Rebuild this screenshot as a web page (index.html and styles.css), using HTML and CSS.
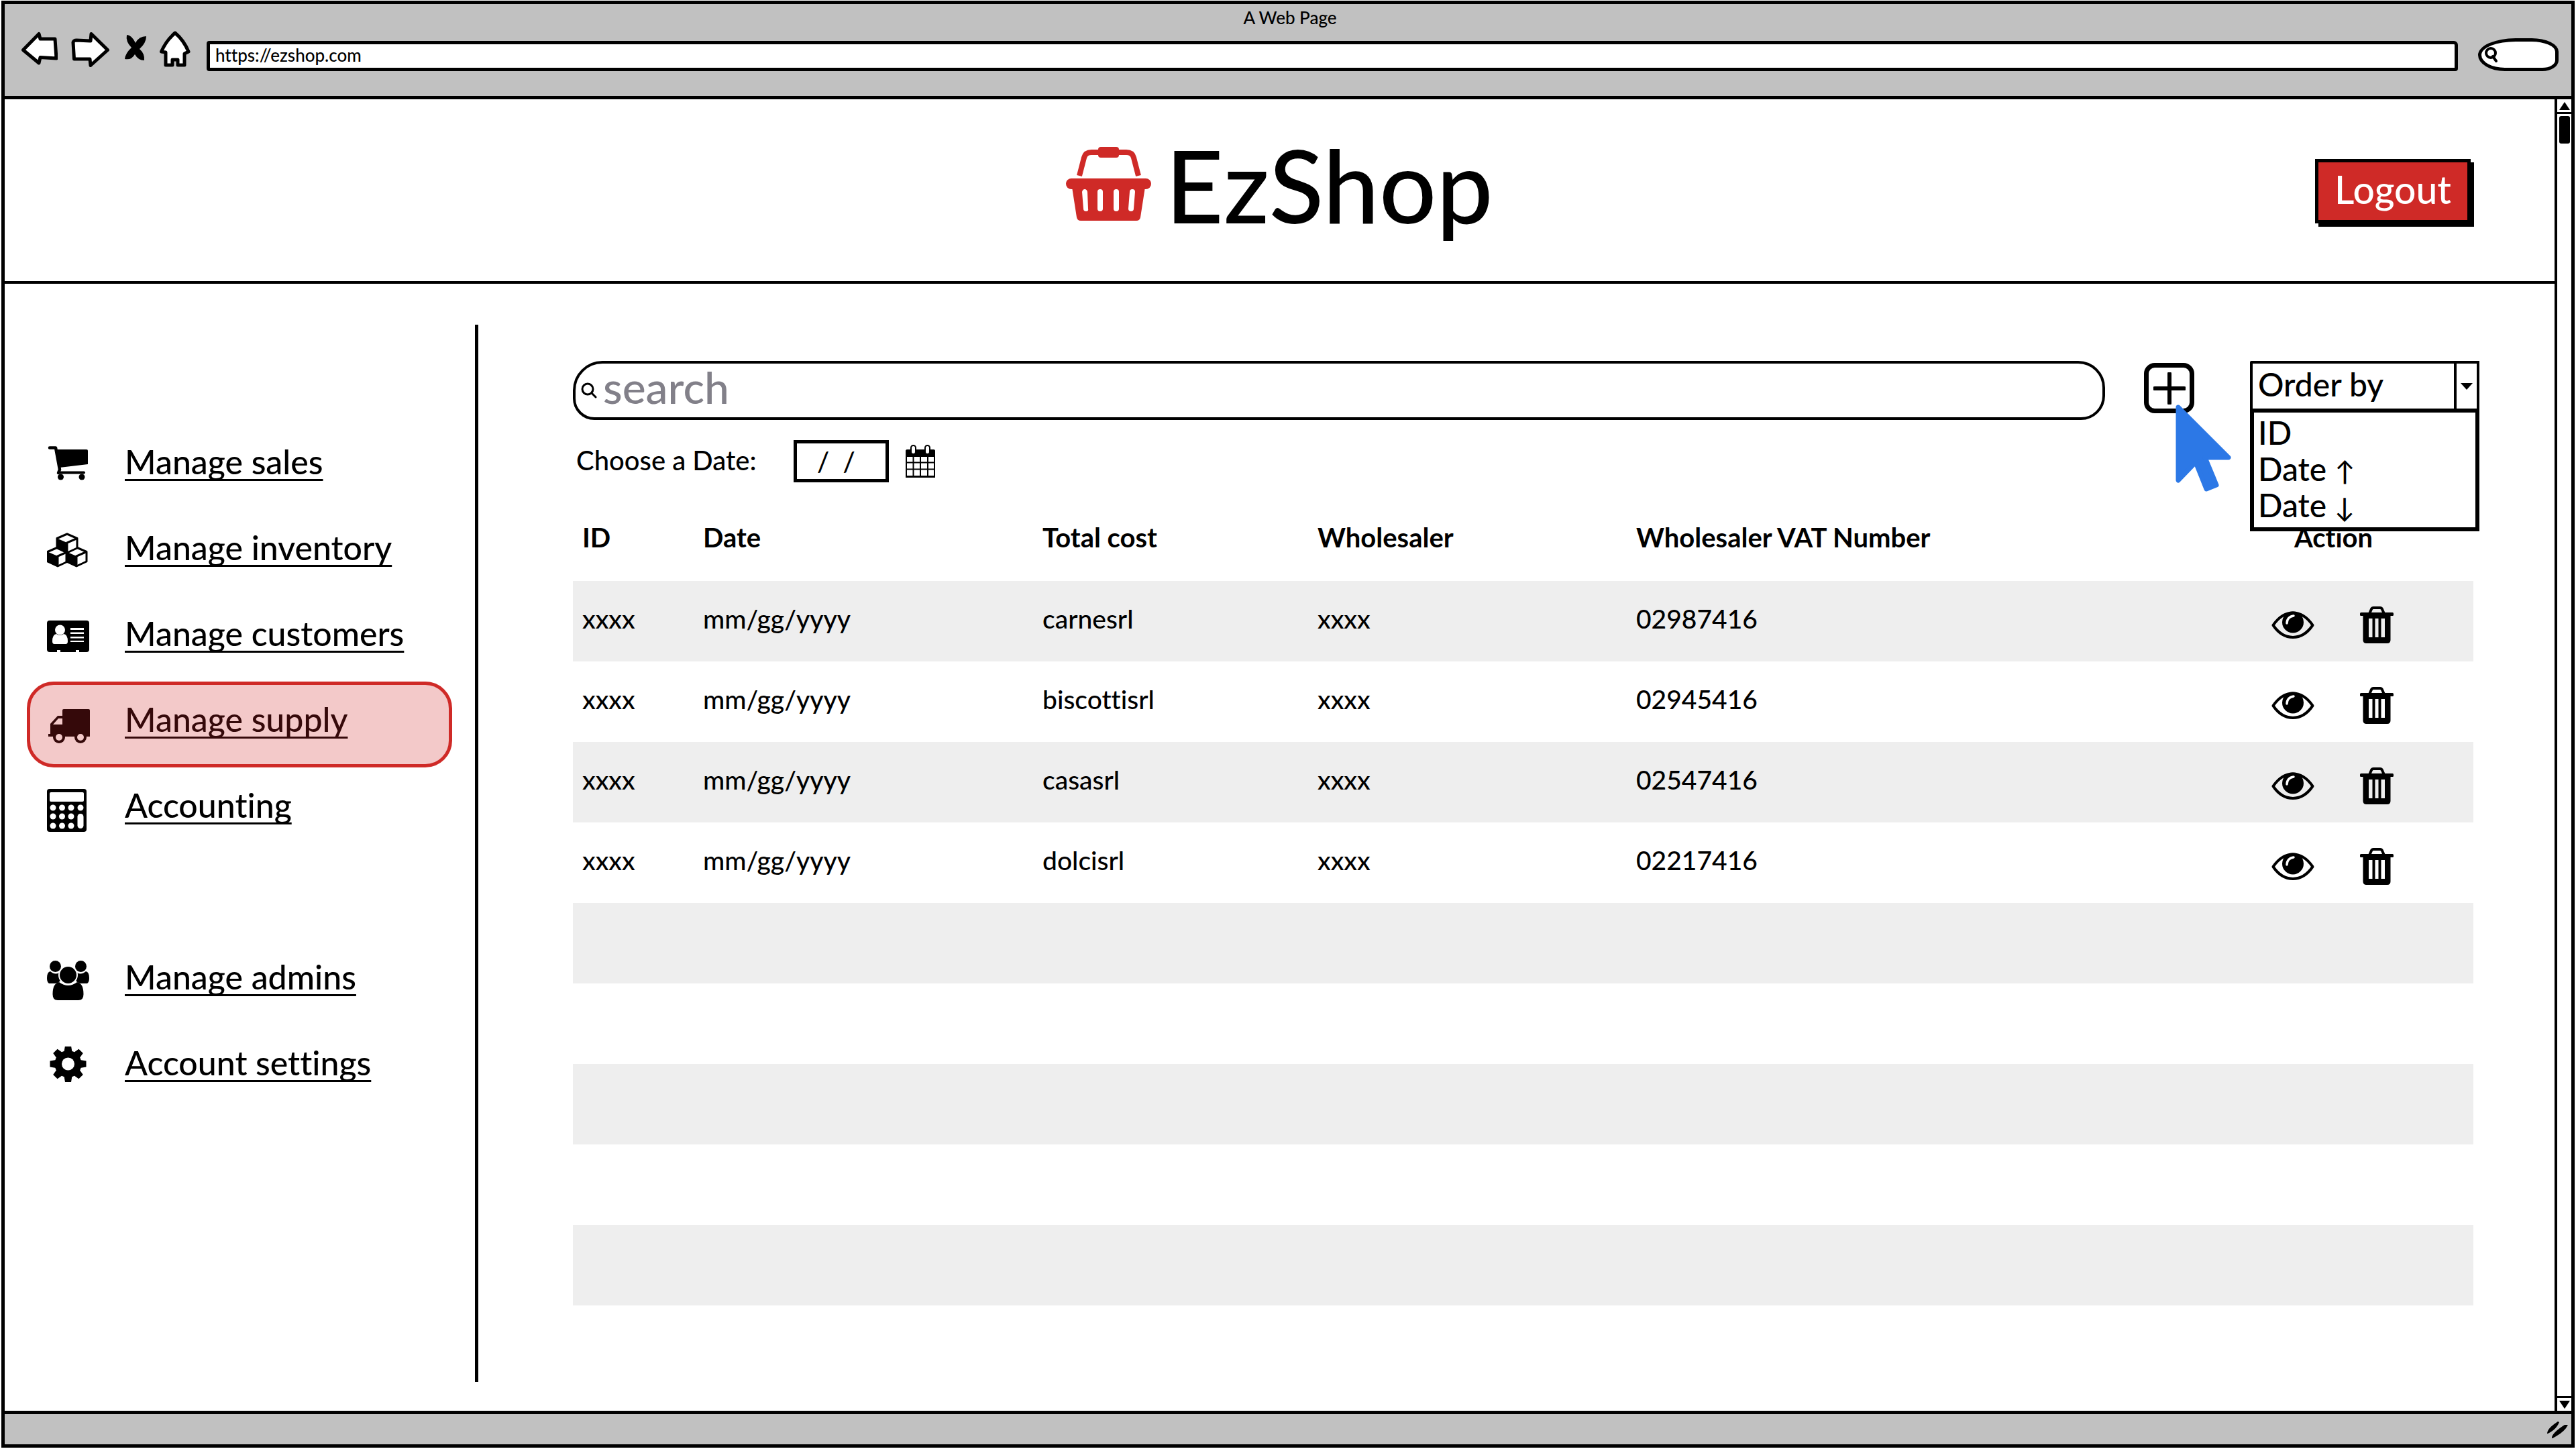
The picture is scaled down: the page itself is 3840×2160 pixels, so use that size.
FILE: index.html
```html
<!DOCTYPE html>
<html lang="en">
<head>
<meta charset="utf-8">
<title>A Web Page</title>
<link rel="stylesheet" href="styles.css">
</head>
<body>
<svg class="sprite" aria-hidden="true">
  <symbol id="cube" viewBox="0 0 34 32">
    <path d="M17 2 32 8.500V23L17 30 2 23V8.500Z" fill="#fff" stroke="#000" stroke-width="3" stroke-linejoin="round"/>
    <path d="M2 8.500 17 15V30L2 23Z" fill="#000"/>
    <path d="M17 30V15L32 8.500" fill="none" stroke="#000" stroke-width="3"/>
  </symbol>
  <symbol id="eye" viewBox="0 0 64 42">
    <path d="M2.500 21C10 10 20 2.500 32 2.500S54 10 61.500 21C54 32 44 39 32 39S10 32 2.500 21Z" fill="none" stroke="#000" stroke-width="4" stroke-linejoin="round"/>
    <circle cx="32" cy="16.500" r="16"/>
    <path d="M23 18C23 12 27 7.500 33 7" fill="none" stroke="#fff" stroke-width="3.500" stroke-linecap="round"/>
  </symbol>
  <symbol id="trash" viewBox="0 0 50 56">
    <path d="M14 11 17 4Q18 2 20 2H30Q32 2 33 4L36 11" fill="none" stroke="#000" stroke-width="4"/>
    <rect y="9" width="50" height="5" rx="1.500"/>
    <path fill-rule="evenodd" d="M4.500 13H45.500V50Q45.500 55 40.500 55H9.500Q4.500 55 4.500 50ZM13 18V46H18.500V18ZM22.500 18V46H27.500V18ZM31.500 18V46H37V18Z"/>
  </symbol>
</svg>

<div class="window">
  <header class="chrome">
    <div class="chrome-title">A Web Page</div>
    <div class="toolbar">
      <div class="toolbar-buttons">
        <button class="tool" type="button" aria-label="Back"><svg width="54" height="54" viewBox="0 0 54 54"><path d="M2.500 28.500 26 4.500 28 12H50L52 41 28 39.500 26 48Z"/></svg></button>
        <button class="tool" type="button" aria-label="Forward"><svg width="60" height="54" viewBox="0 0 60 54"><path d="M3 17Q4 14 8 14L29 15 30 4.500 54.500 28.500 29 51.500 28 42H4.500Z"/></svg></button>
        <button class="tool" type="button" aria-label="Stop"><svg width="32" height="54" viewBox="0 0 32 54"><path class="solid" d="M3 6Q10 6 16 18 21 8 32 8 32 18 22 27 30 34 29 44 20 44 15 35 10 44 0 42 1 33 10 25 1 16 3 6Z"/></svg></button>
        <button class="tool" type="button" aria-label="Home"><svg width="46" height="54" viewBox="0 0 46 54"><path d="M23 3Q36 14 43 31L37 34V51H27V43H19V51H9V32L2.500 31Q10 14 23 3Z"/></svg></button>
      </div>
      <input class="url" type="text" value="https://ezshop.com" aria-label="Address">
      <button class="chrome-search" type="button" aria-label="Search the web"><svg width="22" height="24" viewBox="0 0 22 24"><circle cx="10" cy="9" r="7"/><path d="M13 14 18 21"/></svg></button>
    </div>
  </header>

  <div class="viewport">
    <div class="page">
      <header class="masthead">
        <h1 class="brand">
          <svg width="128" height="112" viewBox="0 0 128 112" fill="#cf2a27" aria-hidden="true">
            <path d="M20 43 27 16Q29 8 38 8H90Q99 8 101 16L108 43" fill="none" stroke="#cf2a27" stroke-width="8"/>
            <rect x="48" y="0" width="31" height="16" rx="4"/>
            <rect x="0" y="47" width="127" height="16" rx="8"/>
            <path fill-rule="evenodd" d="M9 60H118L111 105Q110 110 105 110H22Q17 110 16 105ZM24 67 26 92Q26 96 30 96T33 92L32 67Q31 63 28 63T24 67ZM47 67V92Q47 96 51 96T55 92V67Q55 63 51 63T47 67ZM71 67V92Q71 96 75 96T79 92V67Q79 63 75 63T71 67ZM95 67 93 92Q93 96 97 96T101 92L103 67Q103 63 99 63T95 67Z"/>
          </svg>
          EzShop
        </h1>
        <button class="logout" type="button">Logout</button>
      </header>

      <div class="columns">
        <nav class="sidebar" aria-label="Main">
          <a class="nav-item" href="#sales">
            <svg width="64" height="64" viewBox="0 0 64 64"><path d="M4 3.500H13L19 36 17 41" fill="none" stroke="#000" stroke-width="4.500" stroke-linecap="round" stroke-linejoin="round"/><path d="M13 6H59Q61 6 61 8V28L19 33Z"/><path d="M18 40.500H55" stroke="#000" stroke-width="4" stroke-linecap="round"/><circle cx="20.500" cy="47" r="4.500"/><circle cx="52" cy="47" r="4.500"/></svg>
            <span>Manage sales</span>
          </a>
          <a class="nav-item" href="#inventory">
            <svg width="64" height="64" viewBox="0 0 64 64"><use href="#cube" x="-1" y="22" width="34" height="32"/><use href="#cube" x="27" y="22" width="34" height="32"/><use href="#cube" x="13" y="2" width="34" height="32"/></svg>
            <span>Manage inventory</span>
          </a>
          <a class="nav-item" href="#customers">
            <svg width="64" height="64" viewBox="0 0 64 64"><rect y="5" width="63" height="47" rx="4"/><g fill="#fff"><path d="M8 36Q8 26 14 25 19.500 29 25 25 31 26 31 36 31 40 28 40H11Q8 40 8 36Z"/><circle cx="19.500" cy="19" r="7.500"/><path d="M35 16H55V19H35ZM35 22.500H55V25H35ZM35 29H55V31.500H35ZM35 35H55V37H35ZM15 49H20V52H15ZM43 49H48V52H43Z"/></g></svg>
            <span>Manage customers</span>
          </a>
          <a class="nav-item is-active" href="#supply" aria-current="page">
            <svg width="64" height="64" viewBox="0 0 64 64" fill="#35090a"><path fill-rule="evenodd" d="M23 11Q23 9 25 9H62Q64 9 64 11V50H2V46H5V31L16 19H23ZM9 32H23V23H17Z"/><circle cx="18" cy="51" r="9"/><circle cx="50" cy="51" r="9"/><circle cx="18" cy="51" r="5" fill="#f3c9c9"/><circle cx="50" cy="51" r="5" fill="#f3c9c9"/></svg>
            <span>Manage supply</span>
          </a>
          <a class="nav-item" href="#accounting">
            <svg width="64" height="64" viewBox="0 0 64 64"><rect width="59" height="64" rx="4"/><g fill="#fff"><rect x="4" y="5" width="51" height="14" rx="2"/><circle cx="9" cy="28" r="4.500"/><circle cx="22.500" cy="28" r="4.500"/><circle cx="36" cy="28" r="4.500"/><circle cx="50" cy="28" r="4.500"/><circle cx="9" cy="41" r="4.500"/><circle cx="22.500" cy="41" r="4.500"/><circle cx="36" cy="41" r="4.500"/><circle cx="9" cy="55" r="4.500"/><circle cx="22.500" cy="55" r="4.500"/><circle cx="36" cy="55" r="4.500"/><rect x="45.500" y="37" width="9" height="22" rx="4.500"/></g></svg>
            <span>Accounting</span>
          </a>
          <a class="nav-item nav-group" href="#admins">
            <svg width="64" height="64" viewBox="0 0 64 64"><path d="M0 26Q0 17 5 16 12 22 18 18L20 30Q16 34 12 34H3Q0 32 0 26ZM63 26Q63 17 58 16 51 22 45 18L43 30Q47 34 51 34H60Q63 32 63 26Z"/><circle cx="12.500" cy="8.500" r="8.500"/><circle cx="50.500" cy="8.500" r="8.500"/><path d="M8.500 50Q8.500 34 18 32 31.500 42 45 32 54.500 34 54.500 50 54.500 59 47 59H16Q8.500 59 8.500 50Z"/><circle cx="31.500" cy="21.500" r="13.500" stroke="#fff" stroke-width="2"/></svg>
            <span>Manage admins</span>
          </a>
          <a class="nav-item" href="#settings">
            <svg width="64" height="64" viewBox="0 0 64 64"><g transform="translate(31.500 26)"><circle r="20"/><g id="teeth"><path d="M-6-18-4.500-27H4.500L6-18ZM-6 18-4.500 27H4.500L6 18ZM-18-6-27-4.500V4.500L-18 6ZM18-6 27-4.500V4.500L18 6Z"/></g><use href="#teeth" transform="rotate(45)"/><circle r="9.500" fill="#fff"/></g></svg>
            <span>Account settings</span>
          </a>
        </nav>

        <main class="content">
          <div class="controls">
            <label class="search">
              <svg width="24" height="24" viewBox="0 0 24 24" aria-hidden="true"><circle cx="10" cy="10" r="8"/><path d="M16 16 22 22"/></svg>
              <input type="text" placeholder="search" aria-label="search">
            </label>
            <div class="add-wrap">
              <button class="add" type="button" aria-label="Add"><svg width="48" height="48" viewBox="0 0 48 48"><path d="M24 2V46M2 24H46"/></svg></button>
              <svg class="cursor" width="84" height="130" viewBox="0 0 84 130" aria-hidden="true"><path d="M4 4 79 79H44L61 120 46 126 30 86 4 113Z"/></svg>
            </div>
            <div class="order">
              <select class="order-select" aria-label="Order by"><option>Order by</option></select>
              <span class="order-arrow" aria-hidden="true"><svg width="18" height="12" viewBox="0 0 18 12"><path d="M0 1H18L9 11Z"/></svg></span>
              <ul class="order-menu">
                <li>ID</li>
                <li>Date <span class="direction">↑</span></li>
                <li>Date <span class="direction">↓</span></li>
              </ul>
            </div>
          </div>

          <div class="date-row">
            <label for="date">Choose a Date:</label>
            <input id="date" class="date" type="text" value="/  /">
            <button class="calendar" type="button" aria-label="Open calendar"><svg width="44" height="50" viewBox="0 0 44 50"><rect x="1" y="8" width="42" height="40" rx="2" fill="#fff" stroke="#000" stroke-width="2"/><path d="M0 18V10Q0 7 3 7H41Q44 7 44 10V18ZM0 46H44V49H0Z"/><path d="M11.500 17V47M22 17V47M33 17V47M1 26.500H43M1 36.500H43" stroke="#000" stroke-width="2"/><rect x="8" y="1" width="7" height="13" rx="3.500" fill="#fff" stroke="#000" stroke-width="2"/><rect x="29" y="1" width="7" height="13" rx="3.500" fill="#fff" stroke="#000" stroke-width="2"/></svg></button>
          </div>

          <table class="orders">
            <colgroup><col class="col-id"><col class="col-date"><col class="col-cost"><col class="col-seller"><col><col class="col-action"></colgroup>
            <thead>
              <tr><th>ID</th><th>Date</th><th>Total cost</th><th>Wholesaler</th><th>Wholesaler VAT Number</th><th class="th-action">Action</th></tr>
            </thead>
            <tbody>
              <tr><td>xxxx</td><td>mm/gg/yyyy</td><td>carnesrl</td><td>xxxx</td><td>02987416</td><td><div class="actions"><button type="button" aria-label="View"><svg width="64" height="42"><use href="#eye"/></svg></button><button type="button" aria-label="Delete"><svg width="50" height="56"><use href="#trash"/></svg></button></div></td></tr>
              <tr><td>xxxx</td><td>mm/gg/yyyy</td><td>biscottisrl</td><td>xxxx</td><td>02945416</td><td><div class="actions"><button type="button" aria-label="View"><svg width="64" height="42"><use href="#eye"/></svg></button><button type="button" aria-label="Delete"><svg width="50" height="56"><use href="#trash"/></svg></button></div></td></tr>
              <tr><td>xxxx</td><td>mm/gg/yyyy</td><td>casasrl</td><td>xxxx</td><td>02547416</td><td><div class="actions"><button type="button" aria-label="View"><svg width="64" height="42"><use href="#eye"/></svg></button><button type="button" aria-label="Delete"><svg width="50" height="56"><use href="#trash"/></svg></button></div></td></tr>
              <tr><td>xxxx</td><td>mm/gg/yyyy</td><td>dolcisrl</td><td>xxxx</td><td>02217416</td><td><div class="actions"><button type="button" aria-label="View"><svg width="64" height="42"><use href="#eye"/></svg></button><button type="button" aria-label="Delete"><svg width="50" height="56"><use href="#trash"/></svg></button></div></td></tr>
              <tr><td colspan="6"></td></tr>
              <tr><td colspan="6"></td></tr>
              <tr><td colspan="6"></td></tr>
              <tr><td colspan="6"></td></tr>
              <tr><td colspan="6"></td></tr>
            </tbody>
          </table>
        </main>
      </div>
    </div>

    <div class="scrollbar" aria-hidden="true">
      <div class="scroll-end"><svg width="16" height="12" viewBox="0 0 16 12"><path d="M8 0 16 12H0Z"/></svg></div>
      <div class="scroll-thumb"></div>
      <div class="scroll-end is-bottom"><svg width="16" height="12" viewBox="0 0 16 12"><path d="M0 0H16L8 12Z"/></svg></div>
    </div>
  </div>

  <footer class="statusbar">
    <svg width="34" height="28" viewBox="0 0 34 28" aria-hidden="true"><path d="M2 20Q2 12 18 2L20 3Q16 14 3 20ZM9 27Q8 20 28 7L33 7Q28 18 10 27Z"/></svg>
  </footer>
</div>
</body>
</html>
```

FILE: styles.css
```css
* {
  box-sizing: border-box;
}

html,
body {
  margin: 0;
}

body {
  display: flex;
  min-height: 100vh;
  padding: 1px 2px 2px;
  background: #fff;
  color: #000;
  font-family: Lato, "Liberation Sans", sans-serif;
  font-size: 40px;
  font-weight: 500;
  font-variant-ligatures: none;
}

button,
input,
select {
  margin: 0;
  padding: 0;
  border: 0;
  background: none;
  color: inherit;
  font: inherit;
}

svg {
  display: block;
  flex: none;
}

.sprite {
  position: absolute;
  width: 0;
  height: 0;
}

.window {
  display: flex;
  flex: 1;
  flex-direction: column;
  border: 5px solid #000;
}

/* Browser chrome */

.chrome {
  padding: 0 19px 37px 25px;
  border-bottom: 5px solid #000;
  background: #c1c1c1;
}

.chrome-title {
  font-size: 26px;
  line-height: 40px;
  text-align: center;
}

.toolbar {
  display: flex;
  align-items: flex-end;
  height: 60px;
}

.toolbar-buttons {
  display: flex;
  gap: 20px;
  margin-right: 24px;
  padding-bottom: 6px;
}

.tool path {
  fill: #fff;
  stroke: #000;
  stroke-width: 5px;
  stroke-linejoin: round;
}

.tool .solid {
  fill: #000;
  stroke: none;
}

.url {
  flex: 1;
  height: 45px;
  padding: 0 0 4px 8px;
  border: 5px solid #000;
  border-radius: 4px 6px 4px 4px;
  background: #fff;
  font-size: 26px;
}

.chrome-search {
  display: flex;
  align-items: center;
  width: 120px;
  height: 49px;
  margin-left: 30px;
  padding-left: 4px;
  border: 5px solid #000;
  border-radius: 56px 40px 24px 40px / 25px 20px 16px 24px;
  background: #fff;
}

.chrome-search svg {
  fill: none;
  stroke: #000;
  stroke-width: 4px;
  stroke-linecap: round;
}

.viewport {
  display: flex;
  flex: 1;
}

.page {
  display: flex;
  flex: 1;
  flex-direction: column;
}

.scrollbar {
  display: flex;
  flex-direction: column;
  align-items: center;
  width: 25px;
  border-left: 4px solid #000;
}

.scroll-end {
  display: flex;
  align-items: center;
  justify-content: center;
  align-self: stretch;
  height: 22px;
  border-bottom: 3px solid #000;
}

.scroll-end.is-bottom {
  margin-top: auto;
  border-top: 3px solid #000;
  border-bottom: 0;
}

.scroll-thumb {
  width: 16px;
  height: 41px;
  margin-top: 3px;
  border-radius: 3px;
  background: #000;
}

.statusbar {
  display: flex;
  align-items: center;
  justify-content: flex-end;
  height: 50px;
  padding-right: 4px;
  border-top: 5px solid #000;
  background: #c1c1c1;
}

/* Masthead */

.masthead {
  display: grid;
  grid-template-columns: 1fr auto 1fr;
  align-items: center;
  padding: 55px 125px 72px;
  border-bottom: 4px solid #000;
}

.brand {
  display: flex;
  grid-column: 2;
  align-items: center;
  gap: 20px;
  margin: 0;
  font-size: 150px;
  font-weight: 500;
  line-height: 144px;
}

.logout {
  justify-self: end;
  width: 232px;
  height: 96px;
  margin-top: 20px;
  padding-bottom: 6px;
  border: 5px solid #000;
  background: #cf2a27;
  box-shadow: 5px 5px 0 #000;
  color: #fff;
  font-size: 57px;
}

/* Sidebar */

.columns {
  display: flex;
  flex: 1;
}

.sidebar {
  flex: none;
  width: 706px;
  margin: 61px 0 43px;
  padding: 148px 34px 0 33px;
  border-right: 5px solid #000;
}

.nav-item {
  display: flex;
  align-items: center;
  gap: 52px;
  height: 128px;
  padding-left: 25px;
  border: 5px solid transparent;
  border-radius: 40px;
  color: #000;
  font-size: 50px;
  line-height: 56px;
  text-decoration: none;
}

.nav-item span {
  padding-bottom: 17px;
  text-decoration: underline 3px;
  text-decoration-skip-ink: none;
  text-underline-offset: 7px;
}

.nav-item.is-active {
  border-color: #cf2a27;
  background: #f3c9c9;
  color: #35090a;
}

.nav-group {
  margin-top: 128px;
}

/* Content */

.content {
  flex: 1;
  padding: 115px 112px 0 141px;
}

.controls {
  display: flex;
  align-items: flex-start;
}

.search {
  display: flex;
  flex: 1;
  align-items: center;
  gap: 9px;
  height: 88px;
  padding-left: 8px;
  border: 4px solid #000;
  border-radius: 44px 40px 36px 32px;
}

.search svg {
  fill: none;
  stroke: #000;
  stroke-width: 3px;
  stroke-linecap: round;
}

.search input {
  flex: 1;
  height: 80px;
  padding-bottom: 12px;
  outline: 0;
  font-size: 66px;
}

.search input::placeholder {
  color: #828089;
  opacity: 1;
}

.add-wrap {
  position: relative;
  margin: 3px 83px 0 58px;
}

.add {
  display: flex;
  align-items: center;
  justify-content: center;
  width: 75px;
  height: 75px;
  border: 7px solid #000;
  border-radius: 16px;
}

.add svg {
  stroke: #000;
  stroke-width: 6px;
  stroke-linecap: round;
}

.cursor {
  position: absolute;
  top: 62px;
  left: 47px;
  fill: #2c78e6;
  stroke: #2c78e6;
  stroke-width: 7px;
  stroke-linejoin: round;
}

.order {
  position: relative;
  width: 342px;
  font-size: 48px;
}

.order-select {
  display: block;
  width: 100%;
  height: 75px;
  padding: 0 40px 6px 8px;
  border: 4px solid #000;
  border-radius: 2px;
  appearance: none;
}

.order-arrow {
  position: absolute;
  top: 0;
  right: 0;
  display: flex;
  align-items: center;
  justify-content: center;
  width: 38px;
  height: 75px;
  border: solid #000;
  border-width: 0 4px;
  pointer-events: none;
}

.order-menu {
  position: absolute;
  top: 71px;
  left: 0;
  width: 100%;
  height: 183px;
  margin: 0;
  padding: 3px 6px;
  border: 6px solid #000;
  background: #fff;
  line-height: 54px;
  list-style: none;
}

.direction {
  font-size: 40px;
  line-height: 40px;
}

.date-row {
  display: flex;
  align-items: center;
  margin-top: 30px;
  padding-left: 5px;
}

.date-row label {
  width: 324px;
  padding-bottom: 4px;
}

.date {
  width: 142px;
  height: 63px;
  padding-left: 30px;
  border: 5px solid #000;
}

.calendar {
  margin-left: 25px;
}

.orders {
  width: calc(100% - 9px);
  margin-top: 17px;
  border-collapse: collapse;
  table-layout: fixed;
}

.col-id {
  width: 180px;
}

.col-date {
  width: 506px;
}

.col-cost {
  width: 410px;
}

.col-seller {
  width: 475px;
}

.col-action {
  width: 315px;
}

.orders th {
  height: 130px;
  padding: 0 0 0 14px;
  font-size: 40px;
  text-align: left;
}

.orders .th-action {
  padding-left: 48px;
}

.orders td {
  height: 120px;
  padding: 0 0 8px 14px;
  font-size: 39px;
}

.orders tbody tr:nth-child(odd) {
  background: #eee;
}

.actions {
  display: flex;
  align-items: center;
  gap: 68px;
  padding-top: 20px;
}
```
